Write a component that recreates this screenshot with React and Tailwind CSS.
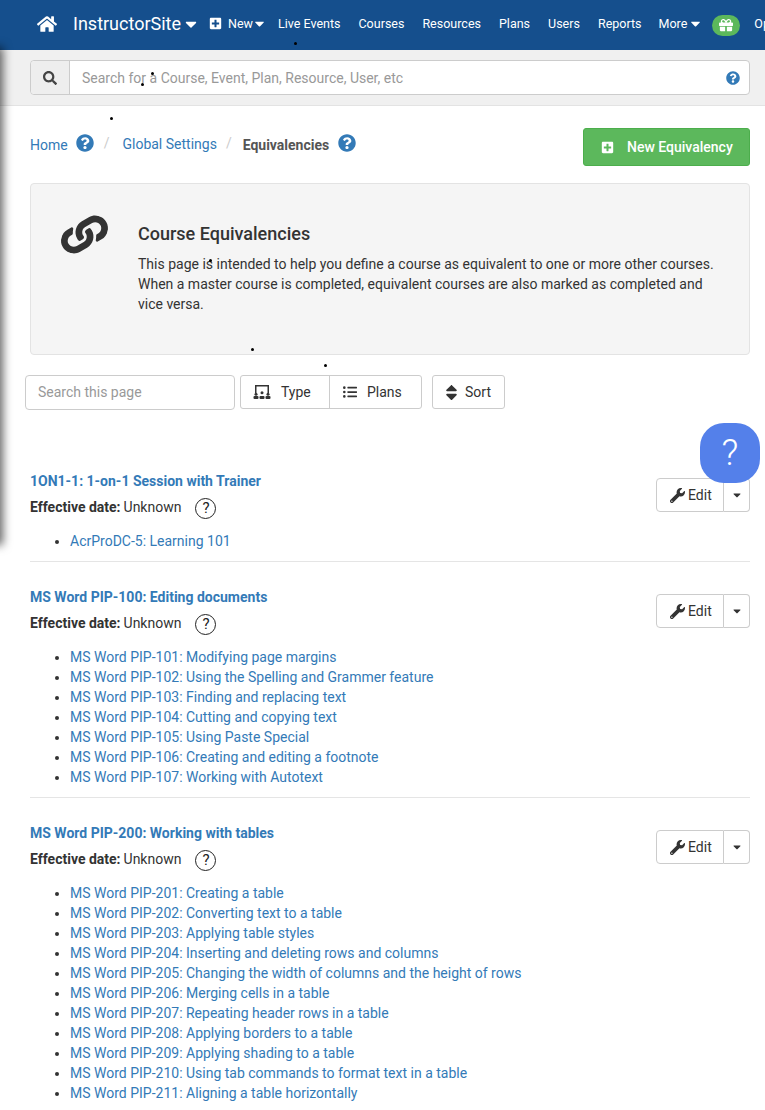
import { FaHome, FaCaretDown, FaPlusSquare, FaSearch, FaQuestionCircle, FaGift, FaLink, FaListUl, FaSort, FaWrench } from 'react-icons/fa';

const navLinks = ['Courses', 'Resources', 'Plans', 'Users', 'Reports'];

const groups = [
  {
    title: '1ON1-1: 1-on-1 Session with Trainer',
    courses: ['AcrProDC-5: Learning 101'],
  },
  {
    title: 'MS Word PIP-100: Editing documents',
    courses: [
      'MS Word PIP-101: Modifying page margins',
      'MS Word PIP-102: Using the Spelling and Grammer feature',
      'MS Word PIP-103: Finding and replacing text',
      'MS Word PIP-104: Cutting and copying text',
      'MS Word PIP-105: Using Paste Special',
      'MS Word PIP-106: Creating and editing a footnote',
      'MS Word PIP-107: Working with Autotext',
    ],
  },
  {
    title: 'MS Word PIP-200: Working with tables',
    courses: [
      'MS Word PIP-201: Creating a table',
      'MS Word PIP-202: Converting text to a table',
      'MS Word PIP-203: Applying table styles',
      'MS Word PIP-204: Inserting and deleting rows and columns',
      'MS Word PIP-205: Changing the width of columns and the height of rows',
      'MS Word PIP-206: Merging cells in a table',
      'MS Word PIP-207: Repeating header rows in a table',
      'MS Word PIP-208: Applying borders to a table',
      'MS Word PIP-209: Applying shading to a table',
      'MS Word PIP-210: Using tab commands to format text in a table',
      'MS Word PIP-211: Aligning a table horizontally',
    ],
  },
];

const TypeIcon = () => (
  <svg width="18" height="14" viewBox="0 0 18 14" fill="currentColor">
    <path d="M2 0h14v8h-1.5V1.5h-11V8H2z" />
    <circle cx="3" cy="9.2" r="1.5" />
    <circle cx="9" cy="7.7" r="1.5" />
    <circle cx="15" cy="9.2" r="1.5" />
    <rect x="0.5" y="11" width="5" height="3" rx="1" />
    <rect x="6.5" y="11" width="5" height="3" rx="1" />
    <rect x="12.5" y="11" width="5" height="3" rx="1" />
  </svg>
);

const Speck = ({ className }) => (
  <div className={`absolute w-[3px] h-[3px] rounded-full bg-black ${className}`} />
);

const EquivalencyGroup = ({ group, last }) => (
  <div className={`relative pb-[10px] mb-[25px] ${last ? '' : 'border-b border-[#e5e5e5]'}`}>
    <div className="font-bold text-[#337ab7] leading-5">{group.title}</div>
    <div className="flex items-center h-[24px] mt-[5px]">
      <span className="font-bold text-[#333] pb-[2px]">Effective date:</span>
      <span className="ml-[3px] pb-[2px]">Unknown</span>
      <span className="flex items-center justify-center ml-[14px] w-[21px] h-[21px] rounded-full border-[1.5px] border-[#222] text-[15px] text-[#222]">?</span>
    </div>
    <ul className="list-disc pl-10 mt-[11px] marker:text-[#333]">
      {group.courses.map((course) => (
        <li key={course} className="leading-5 text-[#337ab7]">{course}</li>
      ))}
    </ul>
    <div className="absolute right-0 top-[7px] flex h-[34px] text-[#333] bg-white">
      <div className="flex items-center gap-[3px] pl-[13px] border border-[#ccc] rounded-l-[4px] w-[68px]">
        <FaWrench className="text-[15px] shrink-0" />
        <span>Edit</span>
      </div>
      <div className="flex items-center justify-center w-[26px] border border-l-0 border-[#ccc] rounded-r-[4px]">
        <FaCaretDown className="text-[12px]" />
      </div>
    </div>
  </div>
);

export default function App() {
  return (
    <div className="relative h-[1110px] overflow-hidden bg-white text-[14px] leading-5 text-[#333] font-['Roboto',sans-serif]">
      {/* top nav */}
      <nav className="flex items-center h-[50px] pl-[37px] pb-[3px] bg-[#154f8d] text-white text-[12.5px] whitespace-nowrap overflow-hidden">
        <FaHome className="text-[20px] shrink-0" />
        <span className="ml-[16px] text-[18px]">InstructorSite</span>
        <FaCaretDown className="ml-[1px] text-[18px] shrink-0" />
        <FaPlusSquare className="ml-[9px] text-[13px] shrink-0" />
        <span className="ml-[6px]">New</span>
        <FaCaretDown className="-ml-[1px] text-[15px] shrink-0" />
        <span className="ml-[11px]">Live Events</span>
        {navLinks.map((link) => (
          <span key={link} className="ml-[18px]">{link}</span>
        ))}
        <span className="ml-[17px]">More</span>
        <FaCaretDown className="ml-[1px] text-[15px] shrink-0" />
        <span className="ml-[9px] flex items-center justify-center w-[28px] h-[21px] mt-[3px] rounded-full bg-[#5cb85c] shrink-0">
          <FaGift className="text-[14px]" />
        </span>
        <span className="ml-[14px]">Open</span>
      </nav>

      {/* search strip */}
      <div className="h-[56px] pl-[30px] pr-[15px] pt-[10px] bg-[#f0f0f0] border-b border-[#e3e3e3]">
        <div className="flex h-[35px] bg-white border border-[#ccc] rounded-[4px]">
          <div className="flex items-center justify-center w-[39px] bg-[#eee] border-r border-[#ccc] rounded-l-[4px] text-[#444]">
            <FaSearch className="text-[14px]" />
          </div>
          <div className="flex-1 flex items-center pl-3 text-[#999]">Search for a Course, Event, Plan, Resource, User, etc</div>
          <div className="flex items-center pr-[9px] text-[#337ab7]">
            <FaQuestionCircle className="text-[14px]" />
          </div>
        </div>
      </div>

      <main className="pl-[30px] pr-[15px]">
        {/* breadcrumb row */}
        <div className="flex items-start justify-between pt-[22px]">
          <div className="flex items-center mt-[4px] h-[22px]">
            <span className="text-[#337ab7] pt-[3px]">Home</span>
            <FaQuestionCircle className="ml-[8px] text-[18px] text-[#337ab7]" />
            <span className="ml-[10px] text-[#ccc]">/</span>
            <span className="ml-[13px] text-[#337ab7] pt-[2px]">Global Settings</span>
            <span className="ml-[9px] text-[#ccc]">/</span>
            <span className="ml-[11px] font-bold text-[#555] pt-[3px]">Equivalencies</span>
            <FaQuestionCircle className="ml-[9px] text-[18px] text-[#337ab7]" />
          </div>
          <div className="flex items-center w-[167px] h-[38px] pl-[17px] bg-[#5cb85c] border border-[#4cae4c] rounded-[3px] text-white font-medium">
            <FaPlusSquare className="text-[13px] shrink-0" />
            <span className="ml-[13px]">New Equivalency</span>
          </div>
        </div>

        {/* info panel */}
        <div className="flex h-[172px] mt-[17px] bg-[#f5f5f5] border border-[#e3e3e3] rounded-[4px]">
          <FaLink className="ml-[32px] mt-[29px] text-[43px] text-[#333] shrink-0 rotate-[15deg]" />
          <div className="ml-[32px] pt-[40px] pr-[30px]">
            <h2 className="text-[18px] font-medium leading-5 text-[#333]">Course Equivalencies</h2>
            <p className="mt-[10px] leading-5">
              This page is intended to help you define a course as equivalent to one or more other courses. When a master course is completed, equivalent courses are also marked as completed and vice versa.
            </p>
          </div>
        </div>

        {/* toolbar */}
        <div className="flex items-start mt-[20px] -ml-[5px]">
          <div className="flex items-center w-[210px] h-[35px] pl-3 pb-[2px] border border-[#ccc] rounded-[4px] text-[#999]">Search this page</div>
          <div className="flex h-[34px] ml-[5px] border border-[#ccc] rounded-[3px]">
            <div className="flex items-center w-[89px] pl-[12px] border-r border-[#ccc]">
              <TypeIcon />
              <span className="ml-[10px]">Type</span>
            </div>
            <div className="flex items-center w-[91px] pl-[13px]">
              <FaListUl className="text-[14px]" />
              <span className="ml-[10px]">Plans</span>
            </div>
          </div>
          <div className="flex items-center h-[34px] w-[73px] ml-[10px] pl-[9px] border border-[#ccc] rounded-[3px]">
            <FaSort className="text-[19px] shrink-0" />
            <span className="ml-[4px]">Sort</span>
          </div>
        </div>

        {/* equivalency list */}
        <div className="mt-[61px]">
          {groups.map((group, i) => (
            <EquivalencyGroup key={group.title} group={group} last={i === groups.length - 1} />
          ))}
        </div>
      </main>

      {/* off-canvas sidebar shadow */}
      <div className="absolute left-[-10px] top-[50px] w-[10px] h-[492px] shadow-[0_0_10px_3px_rgba(0,0,0,0.6)]" />

      {/* floating help button */}
      <div className="absolute left-[700px] top-[423px] flex items-center justify-center w-[60px] h-[60px] rounded-[24px] bg-[#5480ea] text-white text-[37px] font-light">?</div>

      <Speck className="left-[294px] top-[42px]" />
      <Speck className="left-[151px] top-[72px]" />
      <Speck className="left-[141px] top-[83px]" />
      <Speck className="left-[110px] top-[117px]" />
      <Speck className="left-[209px] top-[259px]" />
      <Speck className="left-[251px] top-[348px]" />
      <Speck className="left-[324px] top-[364px]" />
    </div>
  );
}
